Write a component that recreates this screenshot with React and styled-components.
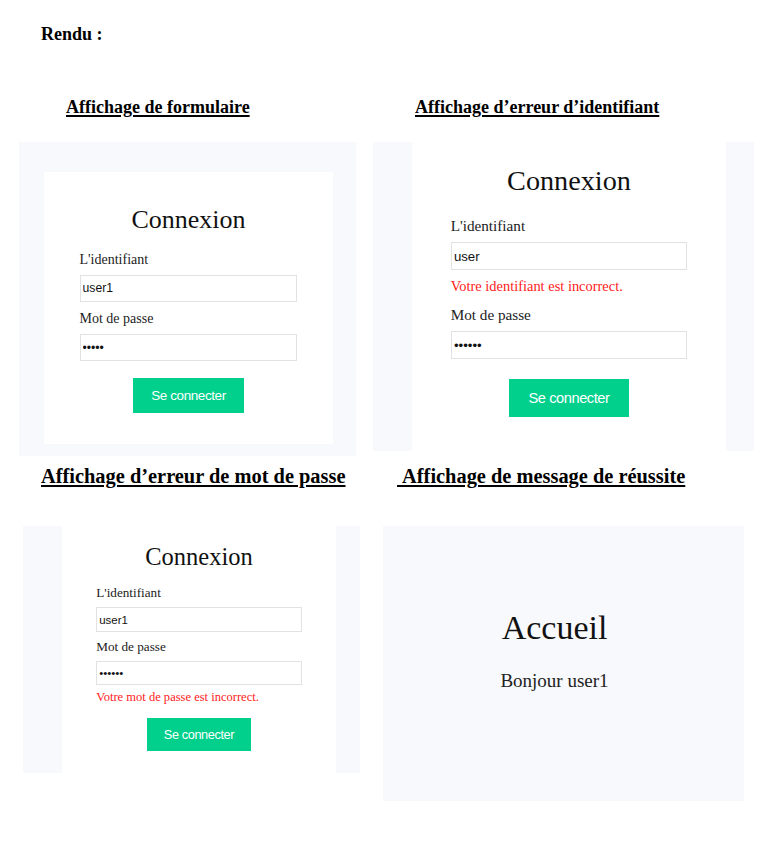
import styled, { createGlobalStyle } from "styled-components";

const GlobalStyle = createGlobalStyle`
  body {
    margin: 0;
    background: #ffffff;
    font-family: "Liberation Serif", "Times New Roman", serif;
    color: #000;
  }
`;

const Page = styled.div`
  padding-top: 24px;
  width: 771px;
`;

const Title = styled.h1`
  margin: 0 0 0 41px;
  font-size: 18px;
  line-height: 20px;
  font-weight: 700;
`;

const Row = styled.div`
  display: grid;
  grid-template-columns: 370px 401px;
  margin-top: ${(p) => p.$top}px;
`;

const Figure = styled.div`
  display: flex;
  flex-direction: column;
  align-items: flex-start;
`;

const Caption = styled.h2`
  margin: 0;
  padding-left: ${(p) => p.$indent}px;
  font-size: ${(p) => p.$size || 18}px;
  line-height: ${(p) => (p.$size ? 23 : 20)}px;
  font-weight: 700;
  text-decoration: underline;
  text-decoration-thickness: 2px;
  text-underline-offset: 2px;
  white-space: pre;
`;

// capture d'écran : fond gris clair
const Shot = styled.div`
  box-sizing: border-box;
  display: flex;
  margin-top: ${(p) => p.$top}px;
  margin-left: ${(p) => p.$left}px;
  width: ${(p) => p.$w}px;
  height: ${(p) => p.$h}px;
  padding: ${(p) => p.$pad || "0"};
  background: #f8f9fc;
`;

const Card = styled.div`
  flex: 1;
  display: flex;
  flex-direction: column;
  align-items: center;
  background: #ffffff;
  font-size: ${(p) => p.$base}px;
  padding-top: ${(p) => p.$padTop}px;
`;

const Heading = styled.h3`
  margin: 0;
  font-size: 1.857em;
  line-height: 1.2;
  font-weight: 400;
  color: #111;
`;

const Form = styled.div`
  --after: ${(p) => p.$after}em;
  display: flex;
  flex-direction: column;
  width: 15.57em;
  margin-top: ${(p) => p.$gap}px;
`;

const Label = styled.label`
  font-size: 1em;
  line-height: 1.2;
  color: #222;
`;

/* font-size 0.87em : les autres mesures sont ramenées à la taille de base */
const Field = styled.input`
  box-sizing: border-box;
  margin: 0.53em 0 var(--after);
  height: 2.14em;
  width: 100%;
  padding: 0 0.17em;
  border: 1px solid #e2e2e2;
  border-radius: 0;
  outline: none;
  font-family: "Liberation Sans", Arial, sans-serif;
  font-size: 0.87em;
  color: #111;
  background: #fff;
`;

const ErrorText = styled.div`
  margin-top: -0.2em;
  margin-bottom: 0.72em;
  font-size: 0.95em;
  line-height: 1.2;
  color: #ff1a1a;
`;

const Submit = styled.button`
  align-self: center;
  margin-top: ${(p) => (p.$afterError ? "0.3em" : "0.6em")};
  width: 8.23em;
  height: 2.59em;
  border: none;
  border-radius: 0;
  background: #00d08c;
  color: #ffffff;
  font-family: "Liberation Sans", Arial, sans-serif;
  font-size: 0.964em;
  letter-spacing: -0.03em;
  padding: 0;
`;

const Welcome = styled.div`
  flex: 1;
  display: flex;
  flex-direction: column;
  align-items: center;
  padding: 82px 18px 0 0;
`;

const WelcomeTitle = styled.h3`
  margin: 0;
  font-size: 34px;
  line-height: 1.2;
  font-weight: 400;
  color: #111;
`;

const WelcomeText = styled.p`
  margin: 21px 0 0;
  font-size: 19px;
  line-height: 1.2;
  color: #222;
`;

const LoginForm = ({ base, padTop, gap, after = 0.8, user, pass, error }) => (
  <Card $base={base} $padTop={padTop}>
    <Heading>Connexion</Heading>
    <Form $gap={gap} $after={after}>
      <Label>L'identifiant</Label>
      <Field type="text" value={user} readOnly />
      {error === "user" && <ErrorText>Votre identifiant est incorrect.</ErrorText>}
      <Label>Mot de passe</Label>
      <Field type="password" value={pass} readOnly />
      {error === "pass" && <ErrorText>Votre mot de passe est incorrect.</ErrorText>}
      <Submit $afterError={error === "pass"}>Se connecter</Submit>
    </Form>
  </Card>
);

export default function App() {
  return (
    <>
      <GlobalStyle />
      <Page>
        <Title>Rendu :</Title>

        <Row $top={53}>
          <Figure>
            <Caption $indent={66}>Affichage de formulaire</Caption>
            <Shot $top={25} $left={19} $w={337} $h={314} $pad="30px 23px 12px 25px">
              <LoginForm base={14} padTop={32} gap={17} user="user1" pass="12345" />
            </Shot>
          </Figure>
          <Figure>
            <Caption $indent={45}>Affichage d’erreur d’identifiant</Caption>
            <Shot $top={25} $left={3} $w={381} $h={309} $pad="0 28px 0 39px">
              <LoginForm base={15.2} padTop={22} gap={19} user="user" pass="123456" error="user" />
            </Shot>
          </Figure>
        </Row>

        <Row $top={9}>
          <Figure>
            <Caption $indent={41} $size={20.4}>Affichage d’erreur de mot de passe</Caption>
            <Shot $top={38} $left={23} $w={337} $h={247} $pad="0 24px 0 39px">
              <LoginForm base={13.2} padTop={16} gap={14} after={0.62} user="user1" pass="123456" error="pass" />
            </Shot>
          </Figure>
          <Figure>
            <Caption $indent={27} $size={20.4}>{"\u00a0Affichage de message de réussite"}</Caption>
            <Shot $top={38} $left={13} $w={361} $h={275}>
              <Welcome>
                <WelcomeTitle>Accueil</WelcomeTitle>
                <WelcomeText>Bonjour user1</WelcomeText>
              </Welcome>
            </Shot>
          </Figure>
        </Row>
      </Page>
    </>
  );
}
